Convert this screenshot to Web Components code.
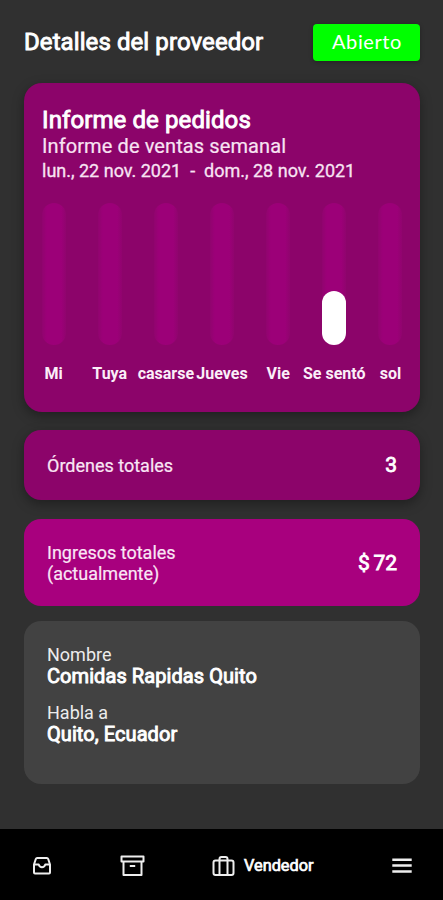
<!DOCTYPE html>
<html lang="es">
<head>
<meta charset="utf-8">
<meta name="viewport" content="width=device-width">
<title>Detalles del proveedor</title>
<style>
  html, body {
    height: 100%;
    margin: 0;
  }

  body {
    background: #303030;
    color: #fff;
    font-family: Roboto, "Liberation Sans", sans-serif;
  }
</style>
</head>
<body>
<vendor-app>
  <page-header slot="header">
    Detalles del proveedor
    <status-badge slot="status">Abierto</status-badge>
  </page-header>

  <order-report>
    <span slot="title">Informe de pedidos</span>
    <span slot="subtitle">Informe de ventas semanal</span>
    <span slot="range">lun., 22 nov. 2021 &nbsp;-&nbsp; dom., 28 nov. 2021</span>
    <day-bar>Mi</day-bar>
    <day-bar>Tuya</day-bar>
    <day-bar>casarse</day-bar>
    <day-bar>Jueves</day-bar>
    <day-bar>Vie</day-bar>
    <day-bar value="38">Se sentó</day-bar>
    <day-bar>sol</day-bar>
  </order-report>

  <stat-card class="orders">Órdenes totales<span slot="value">3</span></stat-card>
  <stat-card class="income">Ingresos totales<br>(actualmente)<span slot="value">$ 72</span></stat-card>

  <vendor-info>
    <info-field>Nombre<span slot="value">Comidas Rapidas Quito</span></info-field>
    <info-field>Habla a<span slot="value">Quito, Ecuador</span></info-field>
  </vendor-info>

  <nav-bar slot="nav">
    <nav-item icon="inbox"></nav-item>
    <nav-item icon="archive"></nav-item>
    <nav-item icon="bag">Vendedor</nav-item>
    <nav-item icon="menu"></nav-item>
  </nav-bar>
</vendor-app>

<script>
function makeTemplate(html) {
  const template = document.createElement('template');
  template.innerHTML = html;
  return template;
}

class BaseElement extends HTMLElement {
  constructor() {
    super();
    this.attachShadow({ mode: 'open' });
    let frag = document.importNode(this.constructor.template.content, true);
    this.shadowRoot.appendChild(frag);
  }
}

class VendorApp extends BaseElement {}
VendorApp.template = makeTemplate(/* html */ `
  <style>
    :host {
      display: flex;
      flex-direction: column;
      height: 900px;
      overflow: hidden;
    }

    main {
      flex: 1;
      padding: 23px 23px 0 24px;
    }
  </style>
  <main>
    <slot name="header"></slot>
    <slot></slot>
  </main>
  <slot name="nav"></slot>
`);

class PageHeader extends BaseElement {}
PageHeader.template = makeTemplate(/* html */ `
  <style>
    :host {
      display: flex;
      align-items: center;
      justify-content: space-between;
      height: 38px;
      margin-bottom: 22px;
    }

    h1 {
      margin: 0;
      font-size: 24px;
      line-height: 28px;
      font-weight: 400;
      letter-spacing: 0.09px;
      white-space: nowrap;
      -webkit-text-stroke: 0.9px;
    }
  </style>
  <h1><slot></slot></h1>
  <slot name="status"></slot>
`);

class StatusBadge extends BaseElement {}
StatusBadge.template = makeTemplate(/* html */ `
  <style>
    :host {
      display: flex;
      align-items: center;
      justify-content: center;
      box-sizing: border-box;
      width: 107px;
      height: 37px;
      padding: 0 0 2px 1px;
      border-radius: 4px;
      background: #00ff00;
      font-family: Lato, "Open Sans", sans-serif;
      font-size: 20px;
      letter-spacing: 0.6px;
      box-shadow: 0 1px 4px rgba(0, 0, 0, .3);
    }
  </style>
  <slot></slot>
`);

class OrderReport extends BaseElement {}
OrderReport.template = makeTemplate(/* html */ `
  <style>
    :host {
      display: block;
      box-sizing: border-box;
      height: 329px;
      margin-bottom: 18px;
      padding-top: 23px;
      border-radius: 18px;
      background: #8c046a;
      box-shadow: 0 4px 12px rgba(0, 0, 0, .35);
    }

    header {
      height: 97px;
      padding-left: 18px;
      white-space: nowrap;
    }

    .title {
      font-size: 24px;
      line-height: 28px;
      letter-spacing: 0.1px;
      -webkit-text-stroke: 0.9px;
    }

    .subtitle {
      font-size: 20px;
      line-height: 25px;
      letter-spacing: 0.1px;
      color: #f8e3f3;
      -webkit-text-stroke: 0.2px;
    }

    .range {
      font-size: 18px;
      line-height: 24px;
      color: #f8e3f3;
      -webkit-text-stroke: 0.3px;
    }

    .chart {
      display: grid;
      grid-template-columns: repeat(7, 1fr);
      padding: 0 1.5px;
    }
  </style>
  <header>
    <div class="title"><slot name="title"></slot></div>
    <div class="subtitle"><slot name="subtitle"></slot></div>
    <div class="range"><slot name="range"></slot></div>
  </header>
  <div class="chart"><slot></slot></div>
`);

class DayBar extends BaseElement {
  connectedCallback() {
    let value = Number(this.getAttribute('value') || 0);
    this.shadowRoot.querySelector('.fill').style.height = value + '%';
  }
}
DayBar.template = makeTemplate(/* html */ `
  <style>
    :host {
      display: flex;
      flex-direction: column;
      align-items: center;
      min-width: 0;
    }

    .track {
      display: flex;
      align-items: flex-end;
      width: 24px;
      height: 142px;
      border-radius: 12px;
      background: linear-gradient(90deg, #90046e, #9c0078 20%, #9c0078 80%, #90046e);
    }

    .fill {
      width: 100%;
      border-radius: 12px;
      background: #fff;
    }

    .label {
      margin-top: 19px;
      font-size: 16px;
      line-height: 19px;
      font-weight: 700;
      color: #fbeef8;
      white-space: nowrap;
    }
  </style>
  <div class="track"><div class="fill"></div></div>
  <div class="label"><slot></slot></div>
`);

class StatCard extends BaseElement {}
StatCard.template = makeTemplate(/* html */ `
  <style>
    :host {
      display: flex;
      align-items: center;
      justify-content: space-between;
      box-sizing: border-box;
      padding: 0 23px;
      border-radius: 17px;
    }

    :host(.orders) {
      height: 70px;
      margin-bottom: 19px;
      background: #8c046a;
      box-shadow: 0 4px 12px rgba(0, 0, 0, .35);
    }

    :host(.income) {
      height: 87px;
      margin-bottom: 15px;
      background: #a8007e;
    }

    .label {
      font-size: 18px;
      line-height: 21px;
      color: #fae6f5;
      -webkit-text-stroke: 0.2px;
    }

    .value {
      font-size: 21px;
      line-height: 24px;
      word-spacing: -1.5px;
      -webkit-text-stroke: 0.8px;
    }
  </style>
  <div class="label"><slot></slot></div>
  <div class="value"><slot name="value"></slot></div>
`);

class VendorInfo extends BaseElement {}
VendorInfo.template = makeTemplate(/* html */ `
  <style>
    :host {
      display: flex;
      flex-direction: column;
      gap: 15px;
      box-sizing: border-box;
      height: 163px;
      padding: 23px 23px 0;
      border-radius: 17px;
      background: #424242;
    }
  </style>
  <slot></slot>
`);

class InfoField extends BaseElement {}
InfoField.template = makeTemplate(/* html */ `
  <style>
    :host {
      display: block;
    }

    .label {
      font-size: 18px;
      line-height: 21px;
      color: #ececec;
    }

    .value {
      font-size: 20px;
      line-height: 22px;
      letter-spacing: 0.07px;
      -webkit-text-stroke: 0.9px;
    }
  </style>
  <div class="label"><slot></slot></div>
  <div class="value"><slot name="value"></slot></div>
`);

class NavBar extends BaseElement {}
NavBar.template = makeTemplate(/* html */ `
  <style>
    :host {
      display: flex;
      align-items: center;
      gap: 66px;
      box-sizing: border-box;
      height: 71px;
      padding: 2px 29px 0 30px;
      background: #000;
    }

    ::slotted(:last-child) {
      margin-left: auto;
    }
  </style>
  <slot></slot>
`);

const icons = {
  inbox: /* html */ `
    <svg width="24" height="24" viewBox="0 0 24 24">
      <path d="M4 10.500v8a1 1 0 0 0 1 1h14a1 1 0 0 0 1-1v-8L18.200 5a1.500 1.500 0 0 0-1.400-1H7.200a1.500 1.500 0 0 0-1.400 1z"/>
      <path d="M4.500 10.500h4.200c.6 2 1.700 2.700 3.300 2.700s2.700-.7 3.300-2.700h4.200"/>
    </svg>`,
  archive: /* html */ `
    <svg width="25" height="24" viewBox="0 0 25 24">
      <rect x="1.500" y="2.500" width="22" height="5"/>
      <path d="M3.500 7.500v13.500h18V7.500M9.800 12h5.400"/>
    </svg>`,
  bag: /* html */ `
    <svg width="24" height="24" viewBox="0 0 24 24">
      <rect x="2.500" y="6.500" width="20" height="14.500" rx="2"/>
      <path d="M8.500 21V5a2 2 0 0 1 2-2h4a2 2 0 0 1 2 2v16"/>
    </svg>`,
  menu: /* html */ `
    <svg width="24" height="24" viewBox="0 0 24 24">
      <path stroke-width="2.500" d="M2.300 5.700h19.400M2.300 11.600h19.400M2.300 17.400h19.400"/>
    </svg>`
};

class NavItem extends BaseElement {
  connectedCallback() {
    let icon = this.getAttribute('icon');
    this.shadowRoot.querySelector('.icon').innerHTML = icons[icon];
  }
}
NavItem.template = makeTemplate(/* html */ `
  <style>
    :host {
      display: flex;
      align-items: center;
      gap: 9px;
      font-size: 16.3px;
      line-height: 20px;
      -webkit-text-stroke: 0.7px;
    }

    :host(:empty) {
      gap: 0;
    }

    .icon {
      display: flex;
    }

    svg {
      fill: none;
      stroke: #eee;
      stroke-width: 2;
      stroke-linejoin: round;
    }
  </style>
  <span class="icon"></span>
  <span><slot></slot></span>
`);

customElements.define('vendor-app', VendorApp);
customElements.define('page-header', PageHeader);
customElements.define('status-badge', StatusBadge);
customElements.define('order-report', OrderReport);
customElements.define('day-bar', DayBar);
customElements.define('stat-card', StatCard);
customElements.define('vendor-info', VendorInfo);
customElements.define('info-field', InfoField);
customElements.define('nav-bar', NavBar);
customElements.define('nav-item', NavItem);
</script>
</body>
</html>
